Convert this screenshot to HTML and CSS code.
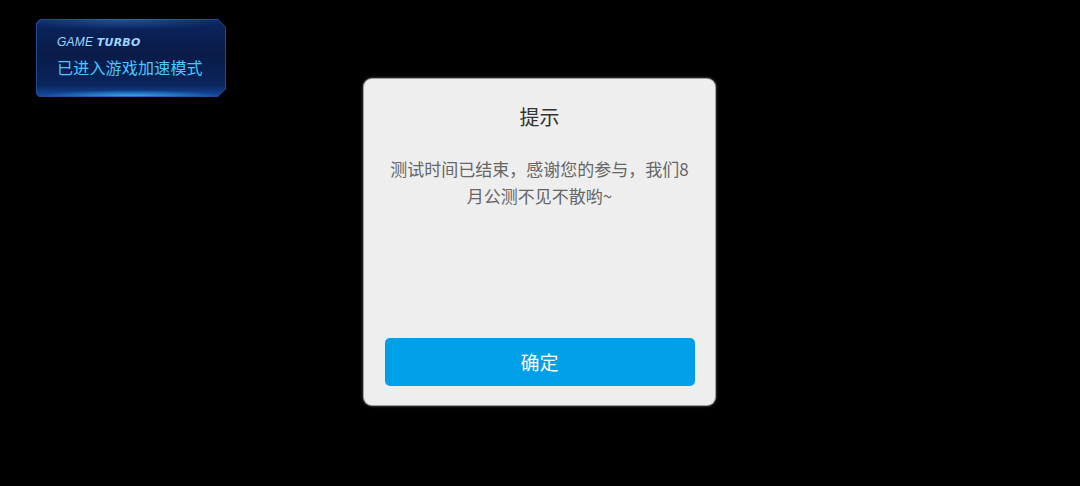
FILE: index.html
```html
<!DOCTYPE html>
<html lang="zh">
<head>
<meta charset="utf-8">
<link rel="stylesheet" href="styles.css">
</head>
<body>
<div class="screen">
  <div class="turbo">
    <div class="turbo-inner">
      <div class="turbo-brand"><span class="thin">GAME</span> <span class="bold">TURBO</span></div>
      <div class="turbo-text">已进入游戏加速模式</div>
    </div>
  </div>
  <div class="dialog">
    <div class="title">提示</div>
    <div class="msg">测试时间已结束，感谢您的参与，我们8月公测不见不散哟~</div>
    <div class="spacer"></div>
    <div class="btn">确定</div>
  </div>
</div>
</body>
</html>
```
FILE: styles.css
```css
html, body {
  margin: 0;
  padding: 0;
  background: #000;
}
body {
  font-family: "Noto Sans CJK SC", "Noto Sans", sans-serif;
}
.screen {
  position: relative;
  width: 1080px;
  height: 486px;
  background: #000;
  overflow: hidden;
}
.turbo {
  position: absolute;
  left: 36px;
  top: 19px;
  width: 190px;
  height: 78px;
  padding: 1px;
  box-sizing: border-box;
  background: linear-gradient(90deg, #1d4a92 0%, #2a66c0 50%, #1d4a92 100%);
  clip-path: polygon(4px 0, 182px 0, 190px 8px, 190px 70px, 182px 78px, 3px 78px, 0 75px, 0 4px);
}
.turbo-inner {
  width: 100%;
  height: 100%;
  box-sizing: border-box;
  padding: 15px 0 0 20px;
  background:
    radial-gradient(ellipse 90px 6px at 50% 100%, rgba(60,180,255,0.85), rgba(30,110,220,0) 100%),
    radial-gradient(ellipse 110px 10px at 45% 0%, rgba(60,140,240,0.4), rgba(30,110,220,0) 100%),
    linear-gradient(180deg, #0b2560 0%, #091b48 45%, #0a245c 85%, #144a9e 100%);
  clip-path: polygon(4px 0, 181px 0, 188px 7px, 188px 69px, 181px 76px, 3px 76px, 0 73px, 0 4px);
}
.turbo-brand {
  font-family: "DejaVu Sans", sans-serif;
  font-style: italic;
  font-size: 11px;
  line-height: 14px;
  letter-spacing: 0.2px;
  color: #9fd6ff;
}
.turbo-brand .thin {
  font-weight: 300;
  font-family: "Liberation Sans", sans-serif;
  font-size: 12px;
}
.turbo-brand .bold {
  font-weight: 700;
  font-size: 11px;
}
.turbo-text {
  margin-top: 6px;
  font-size: 16px;
  line-height: 22px;
  color: #47c9ff;
  letter-spacing: 0.2px;
}
.dialog {
  position: absolute;
  left: 364px;
  top: 79px;
  width: 351px;
  height: 326px;
  box-sizing: border-box;
  background: #eeeeee;
  border-radius: 8px;
  box-shadow: 0 0 0 1px #a0a0a0, 0 0 3px 1px rgba(160,160,160,0.6);
  display: flex;
  flex-direction: column;
  align-items: center;
  padding: 24px 21px 19px;
}
.title {
  font-size: 20px;
  line-height: 28px;
  color: #333;
}
.msg {
  margin-top: 24px;
  width: 306px;
  font-size: 17px;
  line-height: 27px;
  color: #666;
  text-align: center;
}
.spacer {
  flex: 1;
}
.btn {
  width: 310px;
  height: 48px;
  border-radius: 5px;
  background: #00a0e9;
  color: #fff;
  font-size: 19px;
  line-height: 48px;
  text-align: center;
}
```
